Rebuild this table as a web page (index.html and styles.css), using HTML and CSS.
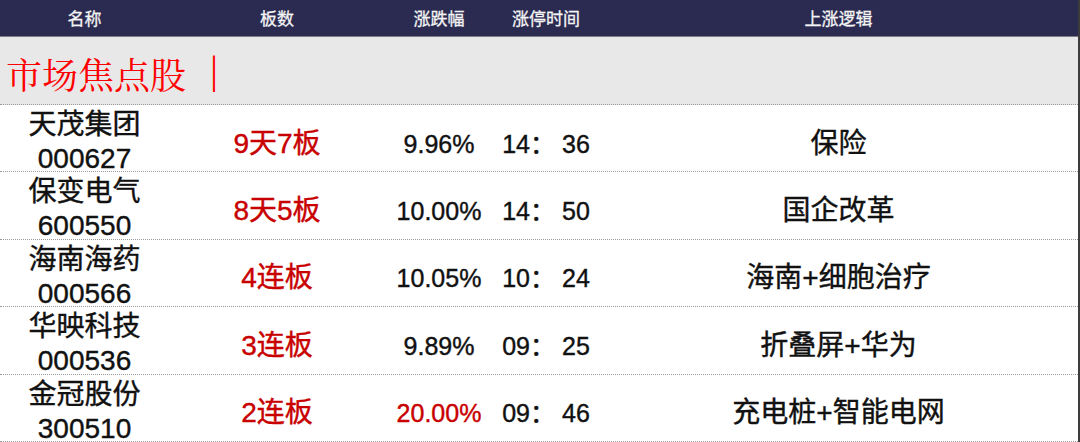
FILE: index.html
```html
<!DOCTYPE html>
<html lang="zh-CN">
<head>
<meta charset="utf-8">
<title>市场焦点股</title>
<link rel="stylesheet" href="styles.css">
</head>
<body>
<div class="sheet">
  <div class="head cols">
    <div class="hc">名称</div>
    <div class="hc">板数</div>
    <div class="hc">涨跌幅</div>
    <div class="hc">涨停时间</div>
    <div class="hc">上涨逻辑</div>
  </div>
  <div class="section">
    <span class="title">市场焦点股</span><span class="bar">|</span>
  </div>
  <div class="row cols">
    <div class="name"><div>天茂集团</div><div class="code">000627</div></div>
    <div class="boards">9天7板</div>
    <div class="pct">9.96%</div>
    <div class="time">14： 36</div>
    <div class="logic">保险</div>
  </div>
  <div class="row cols">
    <div class="name"><div>保变电气</div><div class="code">600550</div></div>
    <div class="boards">8天5板</div>
    <div class="pct">10.00%</div>
    <div class="time">14： 50</div>
    <div class="logic">国企改革</div>
  </div>
  <div class="row cols">
    <div class="name"><div>海南海药</div><div class="code">000566</div></div>
    <div class="boards">4连板</div>
    <div class="pct">10.05%</div>
    <div class="time">10： 24</div>
    <div class="logic">海南+细胞治疗</div>
  </div>
  <div class="row cols">
    <div class="name"><div>华映科技</div><div class="code">000536</div></div>
    <div class="boards">3连板</div>
    <div class="pct">9.89%</div>
    <div class="time">09： 25</div>
    <div class="logic">折叠屏+华为</div>
  </div>
  <div class="row cols">
    <div class="name"><div>金冠股份</div><div class="code">300510</div></div>
    <div class="boards">2连板</div>
    <div class="pct up">20.00%</div>
    <div class="time">09： 46</div>
    <div class="logic">充电桩+智能电网</div>
  </div>
</div>
</body>
</html>
```

FILE: styles.css
```css
html, body {
  margin: 0;
  padding: 0;
  background: #ffffff;
}

body {
  font-family: "Liberation Sans", "Noto Sans CJK SC", sans-serif;
  color: #111111;
}

.sheet {
  width: 1080px;
  height: 442px;
  overflow: hidden;
  box-sizing: border-box;
  border-right: 2px solid #3c3c3c;
  background: #ffffff;
}

.cols {
  display: grid;
  grid-template-columns: 169px 216px 108px 106px 479px;
}

.head {
  height: 37px;
  box-sizing: border-box;
  background: #2b2a51;
  border-bottom: 1px solid #7d7d86;
}

.hc {
  text-align: center;
  line-height: 36px;
  font-size: 17px;
  color: #f4f4f4;
  font-family: "Noto Sans CJK SC", sans-serif;
  -webkit-text-stroke: 0.3px #f4f4f4;
}

.section {
  height: 68px;
  box-sizing: border-box;
  background: #e8e8e8;
  border-bottom: 1px dotted #9a9a9a;
  display: flex;
  align-items: center;
  padding-top: 7px;
  padding-left: 6px;
}

.title {
  font-family: "Noto Serif CJK SC", "Source Han Serif SC", "AR PL UMing CN", "Liberation Serif", serif;
  font-size: 36px;
  line-height: 44px;
  color: #ff0000;
}

.bar {
  font-family: "Liberation Serif", serif;
  font-size: 40px;
  line-height: 44px;
  color: #ff0000;
  margin-left: 24px;
  margin-bottom: 8px;
}

.row {
  height: 67.4px;
  box-sizing: border-box;
  border-bottom: 1px dotted #9a9a9a;
  padding-top: 6px;
  align-items: center;
  -webkit-text-stroke: 0.4px currentColor;
}

.name {
  align-self: start;
  margin-top: -3px;
  text-align: center;
  font-size: 28px;
  line-height: 34px;
}

.boards {
  text-align: center;
  font-size: 28px;
  line-height: 34px;
  color: #c80000;
}

.pct {
  text-align: center;
  font-size: 25px;
  line-height: 34px;
}

.pct.up {
  color: #c80000;
}

.time {
  text-align: center;
  font-size: 25px;
  line-height: 34px;
}

.logic {
  text-align: center;
  font-size: 28px;
  line-height: 34px;
}
```
